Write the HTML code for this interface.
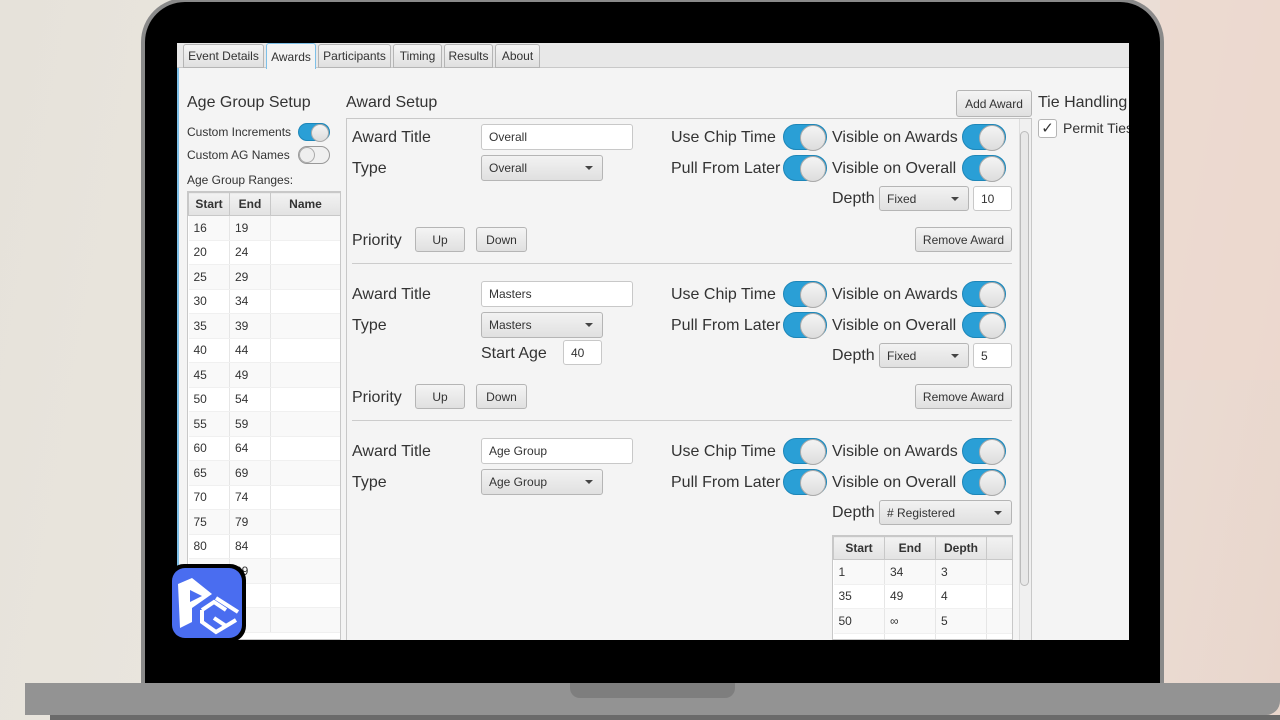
<!DOCTYPE html>
<html><head><meta charset="utf-8"><style>
*{box-sizing:border-box;margin:0;padding:0}
body{width:1280px;height:720px;overflow:hidden;position:relative;font-family:"Liberation Sans",sans-serif;background:linear-gradient(100deg,#e6e2da 0%,#ece8e1 40%,#ebe3dc 70%,#e9d6cc 100%)}
.a{position:absolute}
.lb{position:absolute;font-size:16px;color:#333;line-height:18px;white-space:nowrap}
.sm{position:absolute;font-size:12px;color:#333;line-height:14px;white-space:nowrap}
.in{position:absolute;background:#fff;border:1px solid #c8c8c8;border-radius:3px;font-size:12px;color:#333;padding:0 7px;display:flex;align-items:center}
.btn{position:absolute;background:linear-gradient(#f4f4f4,#e0e0e0);border:1px solid #b5b5b5;border-radius:3px;font-size:12px;color:#333;display:flex;align-items:center;justify-content:center}
.cb{position:absolute;background:linear-gradient(#f2f2f2,#e0e0e0);border:1px solid #b5b5b5;border-radius:3px;font-size:12px;color:#333;padding:0 7px;display:flex;align-items:center}
.cb:after{content:"";position:absolute;right:9px;top:50%;margin-top:-2px;border-left:4px solid transparent;border-right:4px solid transparent;border-top:4px solid #444}
.tg{position:absolute;width:44px;height:26px;border-radius:13px;background:#2a9fd6;border:1px solid #1d86b8}
.tg:after{content:"";position:absolute;right:0px;top:0px;width:24px;height:24px;border-radius:50%;background:linear-gradient(#f4f4f4,#ddd);border:1px solid #aaa}
table{border-collapse:collapse;font-size:12px;color:#333}
td,th{border-right:1px solid #e6e6e6;padding:0 5px;text-align:left;height:24.5px}
th{background:linear-gradient(#f2f2f2,#e2e2e2);border:1px solid #c8c8c8;text-align:center;height:23px;font-weight:bold}
tr:nth-child(odd) td{background:#fff}tr:nth-child(even) td{background:#f9f9f9}
td{border-bottom:1px solid #f0f0f0}
</style></head><body>
<div class="a" style="left:1160px;top:0;width:120px;height:380px;background:#ecd9cf;opacity:.7"></div>
<!-- laptop -->
<div class="a" style="left:141px;top:-2px;width:1023px;height:690px;background:#8a8a8a;border-radius:44px 44px 0 0"></div>
<div class="a" style="left:145px;top:2px;width:1015px;height:684px;background:#000;border-radius:40px 40px 0 0"></div>
<div class="a" style="left:25px;top:683px;width:1255px;height:32px;background:#939393;border-radius:0 0 14px 0"></div>
<div class="a" style="left:50px;top:715px;width:1230px;height:5px;background:#6a6a6a"></div>
<div class="a" style="left:570px;top:683px;width:165px;height:15px;background:#7e7e7e;border-radius:0 0 10px 10px"></div>
<!-- screen -->
<div class="a" style="left:177px;top:43px;width:952px;height:597px;background:#f4f4f4;overflow:hidden">
 <div class="a" style="left:0;top:0;width:952px;height:25px;background:#e8e8e8;border-bottom:1px solid #c8c8c8"></div>
 <div class="a" style="left:0;top:25px;width:2px;height:572px;background:#7ec0e8"></div>
</div>
<!-- tabs -->
<div class="btn" style="left:183px;top:44px;width:81px;height:24px;border-radius:3px 3px 0 0">Event Details</div>
<div class="btn" style="left:266px;top:43px;width:50px;height:26px;border-radius:3px 3px 0 0;background:#f4f4f4;border-color:#7ec0e8;border-bottom:none">Awards</div>
<div class="btn" style="left:318px;top:44px;width:73px;height:24px;border-radius:3px 3px 0 0">Participants</div>
<div class="btn" style="left:393px;top:44px;width:49px;height:24px;border-radius:3px 3px 0 0">Timing</div>
<div class="btn" style="left:444px;top:44px;width:49px;height:24px;border-radius:3px 3px 0 0">Results</div>
<div class="btn" style="left:495px;top:44px;width:45px;height:24px;border-radius:3px 3px 0 0">About</div>
<!-- left panel -->
<div class="lb" style="left:187px;top:94px">Age Group Setup</div>
<div class="sm" style="left:187px;top:125px">Custom Increments</div>
<div class="tg" style="left:298px;top:123px;width:32px;height:18px"></div>
<div class="sm" style="left:187px;top:148px">Custom AG Names</div>
<div class="a" style="left:298px;top:146px;width:32px;height:18px;border-radius:9px;border:1px solid #999;background:#f0f0f0"><div class="a" style="left:0;top:0;width:16px;height:16px;border-radius:50%;border:1px solid #aaa;background:#eee"></div></div>
<style>.tg[style*="32px"]:after{width:16px;height:16px}</style>
<div class="sm" style="left:187px;top:173px">Age Group Ranges:</div>
<div class="a" style="left:187px;top:191px;width:154px;height:449px;border:1px solid #c8c8c8;background:#fff;overflow:hidden">
<table style="width:153px"><tr><th style="width:41px">Start</th><th style="width:41px">End</th><th>Name</th></tr>
<tr><td>16</td><td>19</td><td></td></tr><tr><td>20</td><td>24</td><td></td></tr><tr><td>25</td><td>29</td><td></td></tr><tr><td>30</td><td>34</td><td></td></tr><tr><td>35</td><td>39</td><td></td></tr><tr><td>40</td><td>44</td><td></td></tr><tr><td>45</td><td>49</td><td></td></tr><tr><td>50</td><td>54</td><td></td></tr><tr><td>55</td><td>59</td><td></td></tr><tr><td>60</td><td>64</td><td></td></tr><tr><td>65</td><td>69</td><td></td></tr><tr><td>70</td><td>74</td><td></td></tr><tr><td>75</td><td>79</td><td></td></tr><tr><td>80</td><td>84</td><td></td></tr><tr><td>85</td><td>89</td><td></td></tr><tr><td></td><td></td><td></td></tr><tr><td></td><td></td><td></td></tr></table></div>
<!-- award setup -->
<div class="lb" style="left:346px;top:94px">Award Setup</div>
<div class="btn" style="left:956px;top:90px;width:76px;height:27px">Add Award</div>
<div class="lb" style="left:1038px;top:94px">Tie Handling</div>
<div class="a" style="left:1038px;top:119px;width:19px;height:19px;border:1px solid #b5b5b5;border-radius:3px;background:#fff;font-size:15px;line-height:17px;text-align:center;color:#333">✓</div>
<div class="a" style="left:1063px;top:120px;font-size:14px;color:#333">Permit Ties</div>
<div class="a" style="left:1129px;top:43px;width:31px;height:597px;background:#000"></div>
<div class="a" style="left:346px;top:118px;width:686px;height:522px;border:1px solid #c8c8c8;border-bottom:none"></div>
<div class="a" style="left:1019px;top:119px;width:12px;height:521px;background:#f0f0f0;border-left:1px solid #ddd"></div>
<div class="a" style="left:1020px;top:131px;width:9px;height:455px;background:#e8e8e8;border:1px solid #bbb;border-radius:5px"></div>

<!-- block1 -->
<div class="lb" style="left:352px;top:129px">Award Title</div>
<div class="in" style="left:481px;top:124px;width:152px;height:26px">Overall</div>
<div class="lb" style="left:352px;top:160px">Type</div>
<div class="cb" style="left:481px;top:155px;width:122px;height:26px">Overall</div>
<div class="lb" style="left:671px;top:129px">Use Chip Time</div><div class="tg" style="left:783px;top:124px"></div>
<div class="lb" style="left:832px;top:129px">Visible on Awards</div><div class="tg" style="left:962px;top:124px"></div>
<div class="lb" style="left:671px;top:160px">Pull From Later</div><div class="tg" style="left:783px;top:155px"></div>
<div class="lb" style="left:832px;top:160px">Visible on Overall</div><div class="tg" style="left:962px;top:155px"></div>
<div class="lb" style="left:832px;top:190px">Depth</div>
<div class="cb" style="left:879px;top:186px;width:90px;height:25px">Fixed</div>
<div class="in" style="left:973px;top:186px;width:39px;height:25px">10</div>
<div class="lb" style="left:352px;top:232px">Priority</div>
<div class="btn" style="left:415px;top:227px;width:50px;height:25px">Up</div>
<div class="btn" style="left:476px;top:227px;width:51px;height:25px">Down</div>
<div class="btn" style="left:915px;top:227px;width:97px;height:25px">Remove Award</div>
<div class="a" style="left:352px;top:263px;width:660px;height:1px;background:#ccc"></div>
<!-- block2 -->
<div class="lb" style="left:352px;top:286px">Award Title</div>
<div class="in" style="left:481px;top:281px;width:152px;height:26px">Masters</div>
<div class="lb" style="left:352px;top:317px">Type</div>
<div class="cb" style="left:481px;top:312px;width:122px;height:26px">Masters</div>
<div class="lb" style="left:481px;top:345px">Start Age</div>
<div class="in" style="left:563px;top:340px;width:39px;height:25px">40</div>
<div class="lb" style="left:671px;top:286px">Use Chip Time</div><div class="tg" style="left:783px;top:281px"></div>
<div class="lb" style="left:832px;top:286px">Visible on Awards</div><div class="tg" style="left:962px;top:281px"></div>
<div class="lb" style="left:671px;top:317px">Pull From Later</div><div class="tg" style="left:783px;top:312px"></div>
<div class="lb" style="left:832px;top:317px">Visible on Overall</div><div class="tg" style="left:962px;top:312px"></div>
<div class="lb" style="left:832px;top:347px">Depth</div>
<div class="cb" style="left:879px;top:343px;width:90px;height:25px">Fixed</div>
<div class="in" style="left:973px;top:343px;width:39px;height:25px">5</div>
<div class="lb" style="left:352px;top:389px">Priority</div>
<div class="btn" style="left:415px;top:384px;width:50px;height:25px">Up</div>
<div class="btn" style="left:476px;top:384px;width:51px;height:25px">Down</div>
<div class="btn" style="left:915px;top:384px;width:97px;height:25px">Remove Award</div>
<div class="a" style="left:352px;top:420px;width:660px;height:1px;background:#ccc"></div>
<!-- block3 -->
<div class="lb" style="left:352px;top:443px">Award Title</div>
<div class="in" style="left:481px;top:438px;width:152px;height:26px">Age Group</div>
<div class="lb" style="left:352px;top:474px">Type</div>
<div class="cb" style="left:481px;top:469px;width:122px;height:26px">Age Group</div>
<div class="lb" style="left:671px;top:443px">Use Chip Time</div><div class="tg" style="left:783px;top:438px"></div>
<div class="lb" style="left:832px;top:443px">Visible on Awards</div><div class="tg" style="left:962px;top:438px"></div>
<div class="lb" style="left:671px;top:474px">Pull From Later</div><div class="tg" style="left:783px;top:469px"></div>
<div class="lb" style="left:832px;top:474px">Visible on Overall</div><div class="tg" style="left:962px;top:469px"></div>
<div class="lb" style="left:832px;top:504px">Depth</div>
<div class="cb" style="left:879px;top:500px;width:133px;height:25px"># Registered</div>
<div class="a" style="left:832px;top:535px;width:181px;height:105px;border:1px solid #c8c8c8;background:#fff;overflow:hidden">
<table style="width:180px"><tr><th style="width:51px">Start</th><th style="width:51px">End</th><th style="width:51px">Depth</th><th></th></tr>
<tr><td>1</td><td>34</td><td>3</td><td></td></tr><tr><td>35</td><td>49</td><td>4</td><td></td></tr><tr><td>50</td><td>∞</td><td>5</td><td></td></tr><tr><td></td><td></td><td></td><td></td></tr></table></div>
<!-- logo -->
<div class="a" style="left:168px;top:564px;width:78px;height:78px;background:#000;border-radius:16px"></div>
<div class="a" style="left:172px;top:568px;width:70px;height:70px;background:#4a6df0;border-radius:13px;overflow:hidden">
<svg width="70" height="70" viewBox="0 0 70 70"><path d="M6 16 L20 10 L40 26 L20 40 L20 54 L8 60 Z" fill="#fff"/><path d="M18 22 L30 28 L18 34 Z" fill="#4a6df0"/><path d="M44 30 L66 44 M30 42 L42 34 L54 42 M30 42 L30 54 L44 64 L64 52 M42 50 L54 58" stroke="#fff" stroke-width="4" fill="none"/></svg></div>
</body></html>
